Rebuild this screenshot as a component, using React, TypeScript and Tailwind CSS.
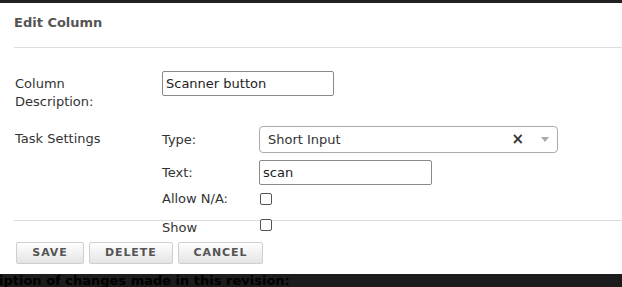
import type { ReactNode } from 'react';

const font = { fontFamily: '"DejaVu Sans", Verdana, sans-serif' };

function Check() {
  return <span className="block h-[12px] w-[12px] rounded-[2px] border border-[#555] bg-white" />;
}

function SubRow({ label, children, className = '' }: { label: string; children: ReactNode; className?: string }) {
  return (
    <div className={`flex items-center ${className}`}>
      <div className="w-[97px] leading-[18px]">{label}</div>
      <div className="flex items-center">{children}</div>
    </div>
  );
}

function Btn({ children, className = '' }: { children: ReactNode; className?: string }) {
  return (
    <button
      className={`h-[22px] rounded-[2px] border border-[#cfcfcf] bg-gradient-to-b from-white to-[#e4e4e4] px-[15px] text-[11px] font-bold leading-[20px] tracking-[0.9px] text-[#555] ${className}`}
    >
      {children}
    </button>
  );
}

export default function App() {
  return (
    <div className="h-[287px] w-[622px] overflow-hidden bg-white text-[13px] text-[#333]" style={font}>
      <div className="h-[3px] bg-[#222]" />

      <div className="pl-[14px]">
        <div className="h-[45px] border-b border-[#ddd] pt-[11px] font-bold leading-[18px] text-[#555]">
          Edit Column
        </div>

        <div className="pl-[1px] pt-[23px]">
          <div className="flex items-start">
            <div className="w-[147px] pt-[4px] leading-[18px]">
              Column
              <br />
              Description:
            </div>
            <input
              readOnly
              value="Scanner button"
              className="h-[25px] w-[172px] rounded-[2px] border border-[#8a8a8a] px-[3px] text-[13px] text-[#222] outline-none"
            />
          </div>

          <div className="mt-[15px] flex items-start">
            <div className="w-[147px] pt-[4px] leading-[18px]">Task Settings</div>
            <div>
              <SubRow label="Type:">
                <div className="flex h-[27px] w-[299px] items-center rounded-[4px] border border-[#aaa] bg-white pl-[8px] pr-[8px] text-[#333]">
                  <span className="flex-1">Short Input</span>
                  <span className="mr-[17px] text-[15px] font-bold leading-none text-[#333]">×</span>
                  <svg width="8" height="5" viewBox="0 0 8 5">
                    <path d="M0 0h8L4 5z" fill="#aaa" />
                  </svg>
                </div>
              </SubRow>
              <SubRow label="Text:" className="mt-[7px]">
                <input
                  readOnly
                  value="scan"
                  className="h-[25px] w-[173px] rounded-[2px] border border-[#8a8a8a] px-[3px] text-[13px] text-[#222] outline-none"
                />
              </SubRow>
              <SubRow label="Allow N/A:" className="mt-[5px]">
                <span className="ml-[1px]">
                  <Check />
                </span>
              </SubRow>
            </div>
          </div>
        </div>

        <div className="mt-[12px] h-px bg-[#ddd]" />

        <div className="-mt-[2px] flex items-start pl-[148px]">
          <div className="w-[97px] leading-[18px]">Show</div>
          <span className="ml-[1px]">
            <Check />
          </span>
        </div>

        <div className="mt-[5px] flex gap-[5px] pl-[2px]">
          <Btn className="min-w-[68px]">SAVE</Btn>
          <Btn>DELETE</Btn>
          <Btn>CANCEL</Btn>
        </div>
      </div>

      <div className="mt-[10px] h-[15px] overflow-hidden bg-[#1c1c1c]">
        <div className="-ml-[1px] whitespace-nowrap font-bold leading-[14px] text-black">
          iption of changes made in this revision:
        </div>
      </div>
    </div>
  );
}
